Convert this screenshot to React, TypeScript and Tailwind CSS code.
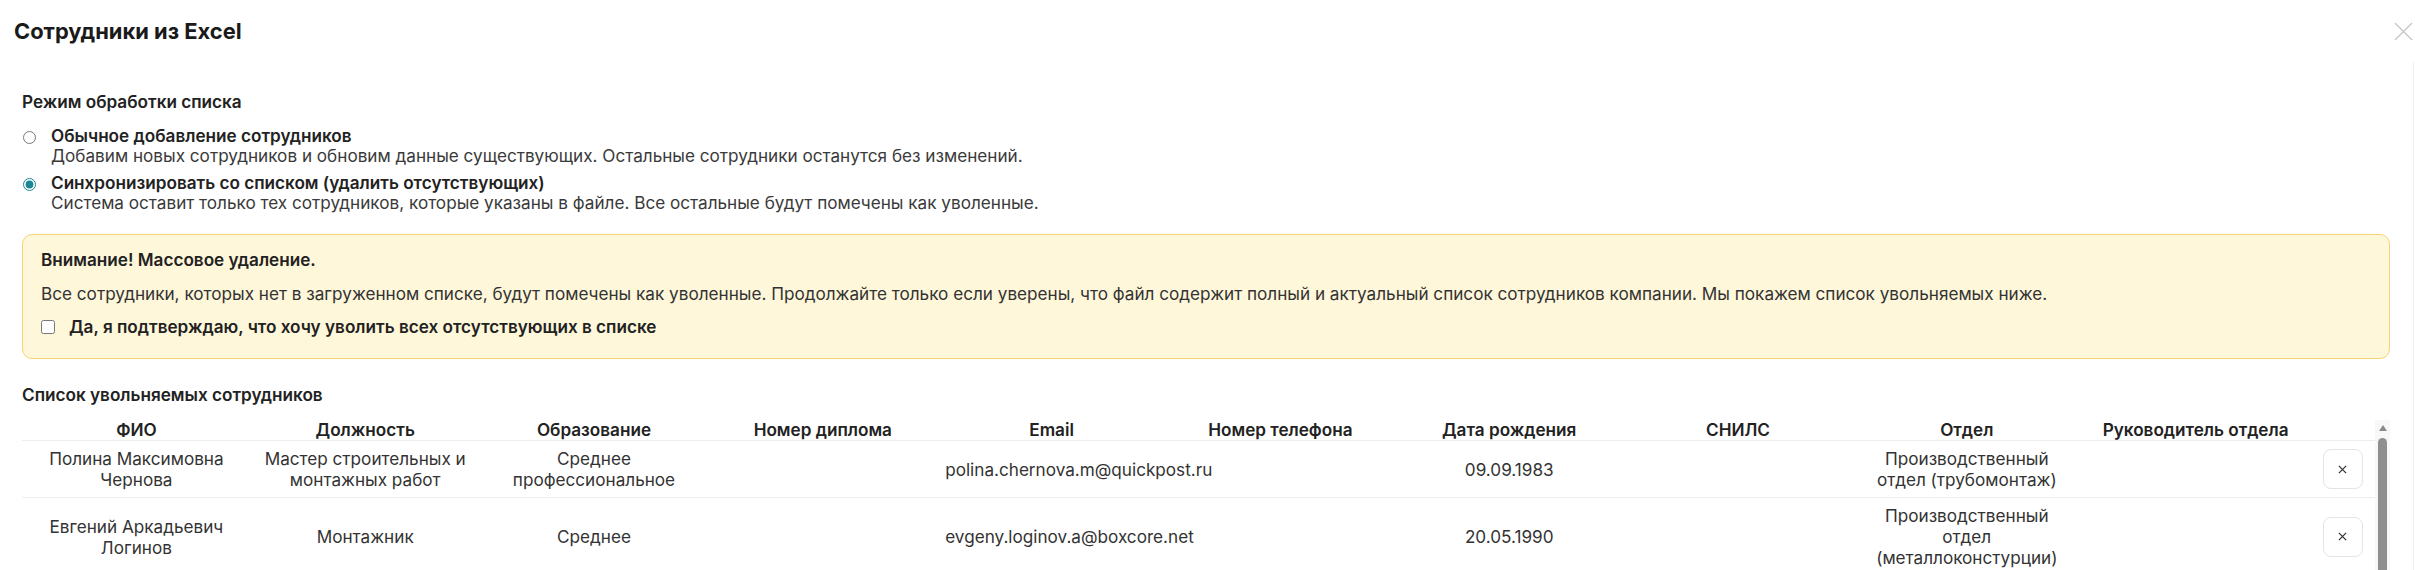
const columns = [
  "ФИО",
  "Должность",
  "Образование",
  "Номер диплома",
  "Email",
  "Номер телефона",
  "Дата рождения",
  "СНИЛС",
  "Отдел",
  "Руководитель отдела",
];

type Employee = {
  name: string;
  position: string;
  education: string;
  diploma: string;
  email: string;
  phone: string;
  birthDate: string;
  snils: string;
  department: string;
  head: string;
};

const employees: Employee[] = [
  {
    name: "Полина Максимовна Чернова",
    position: "Мастер строительных и монтажных работ",
    education: "Среднее профессиональное",
    diploma: "",
    email: "polina.chernova.m@quickpost.ru",
    phone: "",
    birthDate: "09.09.1983",
    snils: "",
    department: "Производственный отдел (трубомонтаж)",
    head: "",
  },
  {
    name: "Евгений Аркадьевич Логинов",
    position: "Монтажник",
    education: "Среднее",
    diploma: "",
    email: "evgeny.loginov.a@boxcore.net",
    phone: "",
    birthDate: "20.05.1990",
    snils: "",
    department: "Производственный отдел (металлоконстурции)",
    head: "",
  },
];

function CloseIcon({ className }: { className?: string }) {
  return (
    <svg viewBox="0 0 20 20" fill="none" stroke="currentColor" strokeWidth={1.3} className={className}>
      <path d="M1 1L19 19M19 1L1 19" />
    </svg>
  );
}

function SmallX() {
  return (
    <svg viewBox="0 0 10 10" fill="none" stroke="currentColor" strokeWidth={1.4} className="h-[9px] w-[9px]">
      <path d="M1 1L9 9M9 1L1 9" />
    </svg>
  );
}

function ModeOption({
  checked,
  title,
  description,
}: {
  checked: boolean;
  title: string;
  description: string;
}) {
  return (
    <label className="flex items-start gap-[15px]">
      <input
        type="radio"
        name="mode"
        defaultChecked={checked}
        className="mt-[5px] ml-[1px] h-[13px] w-[13px] shrink-0 accent-[#1b8796]"
      />
      <span className="flex flex-col">
        <span className="font-semibold leading-[20px] text-[#222]">{title}</span>
        <span className="leading-[20px] text-[#3a3a3a]">{description}</span>
      </span>
    </label>
  );
}

export default function App() {
  return (
    <div className="h-[570px] overflow-hidden bg-white text-[17.15px] text-[#333] font-['Inter',_'Noto_Sans',_sans-serif]">
      <div className="flex h-[62px] items-center justify-between pl-[14px] pr-[2px]">
        <h1 className="text-[21.9px] font-bold leading-[26px] text-[#1a1a1a]">Сотрудники из Excel</h1>
        <button className="text-[#c4c4c4]">
          <CloseIcon className="h-[19px] w-[19px]" />
        </button>
      </div>

      <div className="mr-[1px] h-[508px] border-r border-[#f0f0f0] pl-[22px] pr-[23px] pt-[30px]">
        <div className="font-semibold leading-[20px] text-[#222]">Режим обработки списка</div>

        <div className="mt-[14px] flex flex-col gap-[7px]">
          <ModeOption
            checked={false}
            title="Обычное добавление сотрудников"
            description="Добавим новых сотрудников и обновим данные существующих. Остальные сотрудники останутся без изменений."
          />
          <ModeOption
            checked
            title="Синхронизировать со списком (удалить отсутствующих)"
            description="Система оставит только тех сотрудников, которые указаны в файле. Все остальные будут помечены как уволенные."
          />
        </div>

        <div className="mt-[21px] rounded-[10px] border border-[#f4d472] bg-[#fff7da] pb-[21px] pl-[18px] pr-[18px] pt-[15px]">
          <div className="font-semibold leading-[20px] text-[#222]">Внимание! Массовое удаление.</div>
          <p className="mt-[14px] leading-[20px] text-[#333]">
            Все сотрудники, которых нет в загруженном списке, будут помечены как уволенные. Продолжайте только
            если уверены, что файл содержит полный и актуальный список сотрудников компании. Мы покажем список
            увольняемых ниже.
          </p>
          <label className="mt-[13px] flex h-[20px] items-center gap-[14px]">
            <input type="checkbox" className="h-[14px] w-[14px] shrink-0 accent-[#1b8796]" />
            <span className="font-semibold leading-[20px] text-[#222]">
              Да, я подтверждаю, что хочу уволить всех отсутствующих в списке
            </span>
          </label>
        </div>

        <div className="mt-[26px] font-semibold leading-[20px] text-[#222]">Список увольняемых сотрудников</div>

        <div className="mt-[15px] flex h-[160px]">
          <div className="min-w-0 flex-1">
            <div className="grid grid-cols-[repeat(10,minmax(0,1fr))_65px] border-b border-[#eeeeee] bg-white">
              {columns.map((c) => (
                <div key={c} className="px-2 text-center font-semibold leading-[20px] text-[#222]">
                  {c}
                </div>
              ))}
              <div />
            </div>

            {employees.map((e) => (
              <div
                key={e.email}
                className="grid grid-cols-[repeat(10,minmax(0,1fr))_65px] items-center border-b border-[#eeeeee] py-[7px] leading-[21px] text-[#333]"
              >
                <div className="px-2 text-center">{e.name}</div>
                <div className="px-2 text-center">{e.position}</div>
                <div className="px-2 text-center">{e.education}</div>
                <div className="px-2 text-center">{e.diploma}</div>
                <div className="px-2 text-center">{e.email}</div>
                <div className="px-2 text-center">{e.phone}</div>
                <div className="px-2 text-center">{e.birthDate}</div>
                <div className="px-2 text-center">{e.snils}</div>
                <div className="px-2 text-center">
                  <div className="mx-auto max-w-[196px]">{e.department}</div>
                </div>
                <div className="px-2 text-center">{e.head}</div>
                <div className="flex justify-center">
                  <button className="flex h-[40px] w-[40px] items-center justify-center rounded-[8px] border border-[#e4e4e4] bg-white text-[#333]">
                    <SmallX />
                  </button>
                </div>
              </div>
            ))}
          </div>

          {/* scrollbar of the list */}
          <div className="flex w-[15px] shrink-0 flex-col items-center bg-[#f8f8f8] pt-[5px]">
            <svg viewBox="0 0 8 6" className="h-[6px] w-[8px] text-[#8a8a8a]" fill="currentColor">
              <path d="M4 0L8 6H0Z" />
            </svg>
            <div className="mt-[7px] w-[9px] flex-1 rounded-t-full bg-[#8f8f8f]" />
          </div>
        </div>
      </div>
    </div>
  );
}
